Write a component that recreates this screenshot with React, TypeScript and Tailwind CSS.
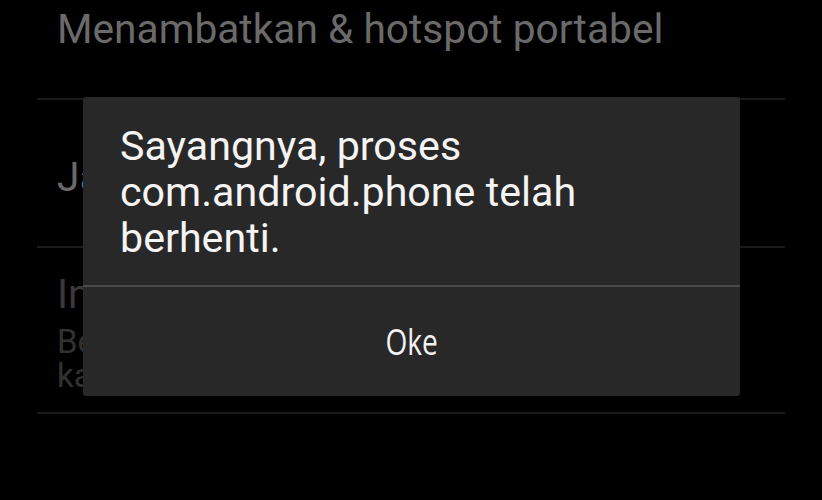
import React from "react";

export default function App() {
  return (
    <div className="relative w-[822px] h-[500px] bg-black overflow-hidden" style={{ fontFamily: "Roboto, 'Noto Sans', sans-serif" }}>
      <div className="flex flex-col px-[37px]">
        <div className="h-[100px] pt-[6px] pl-[20px] border-b-2 border-[#1a1a1a]">
          <div className="text-[40.7px] leading-[46px] font-normal text-[#6a6a6a] whitespace-nowrap">Menambatkan &amp; hotspot portabel</div>
        </div>
        <div className="h-[148px] pt-[54px] pl-[20px] border-b-2 border-[#1a1a1a]">
          <div className="text-[40.7px] leading-[46px] font-normal text-[#6a6a6a] whitespace-nowrap">Jaringan seluler</div>
        </div>
        <div className="h-[166px] pt-[23px] pl-[20px] border-b-2 border-[#1a1a1a]">
          <div className="text-[40.7px] leading-[46px] font-normal text-[#3a3a3a] whitespace-nowrap">Internet seluler</div>
          <div className="text-[33px] leading-[34px] font-normal text-[#313131] whitespace-nowrap mt-[8px]">
            <div>Bergantung pada</div>
            <div>kartu SIM</div>
          </div>
        </div>
      </div>

      <div className="absolute left-[83px] top-[97px] w-[657px] h-[299px] bg-[#282828] rounded-[3px] flex flex-col">
        <div className="h-[188px] pt-[26px] pl-[37px] pr-[30px] text-[41.2px] leading-[46px] text-[#f4f4f4]">
          Sayangnya, proses<br />com.android.phone telah<br />berhenti.
        </div>
        <div className="h-[2px] bg-[#4a4a4a]" />
        <div className="flex-1 flex items-center justify-center">
          <span className="text-[36px] text-[#f2f2f2] scale-x-[0.78] inline-block" style={{ fontFamily: "'Open Sans', sans-serif" }}>Oke</span>
        </div>
      </div>
    </div>
  );
}
